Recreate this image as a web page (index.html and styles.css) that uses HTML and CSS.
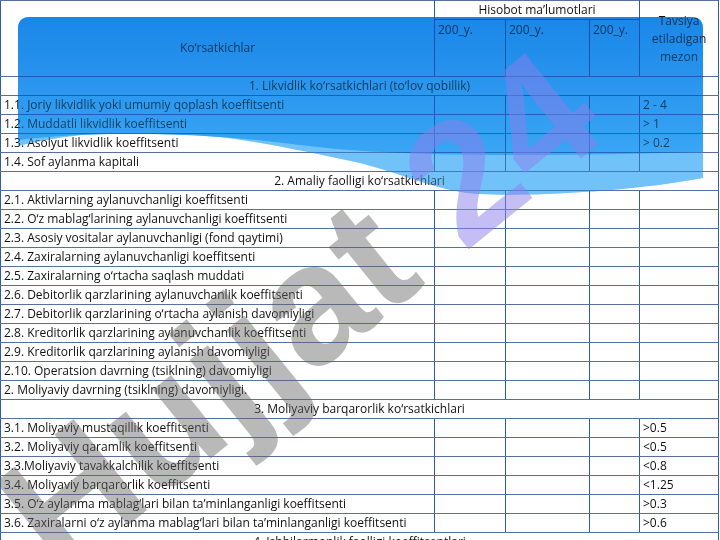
FILE: index.html
```html
<!DOCTYPE html>
<html lang="uz">
<head>
<meta charset="utf-8">
<title>Ko'rsatkichlar</title>
<link rel="stylesheet" href="styles.css">
</head>
<body>
<div class="page">
  <table class="grid">
    <colgroup>
      <col class="c-name"><col class="c-y1"><col class="c-y2"><col class="c-y3"><col class="c-norm">
    </colgroup>
    <tr class="h1">
      <td rowspan="2" class="head-name">Ko‘rsatkichlar</td>
      <td colspan="3" class="center">Hisobot ma’lumotlari</td>
      <td rowspan="2" class="head-norm">Tavsiya etiladigan mezon</td>
    </tr>
    <tr class="h2">
      <td class="year">200_y.</td>
      <td class="year">200_y.</td>
      <td class="year">200_y.</td>
    </tr>
    <tr><td colspan="5" class="section">1. Likvidlik ko‘rsatkichlari (to‘lov qobillik)</td></tr>
    <tr><td>1.1. Joriy likvidlik yoki umumiy qoplash koeffitsenti</td><td></td><td></td><td></td><td>2 - 4</td></tr>
    <tr><td>1.2. Muddatli likvidlik koeffitsenti</td><td></td><td></td><td></td><td>&gt; 1</td></tr>
    <tr><td>1.3. Asolyut likvidlik koeffitsenti</td><td></td><td></td><td></td><td>&gt; 0.2</td></tr>
    <tr><td>1.4. Sof aylanma kapitali</td><td></td><td></td><td></td><td></td></tr>
    <tr><td colspan="5" class="section">2. Amaliy faolligi ko‘rsatkichlari</td></tr>
    <tr><td>2.1. Aktivlarning aylanuvchanligi koeffitsenti</td><td></td><td></td><td></td><td></td></tr>
    <tr><td>2.2. O‘z mablag‘larining aylanuvchanligi koeffitsenti</td><td></td><td></td><td></td><td></td></tr>
    <tr><td>2.3. Asosiy vositalar aylanuvchanligi (fond qaytimi)</td><td></td><td></td><td></td><td></td></tr>
    <tr><td>2.4. Zaxiralarning aylanuvchanligi koeffitsenti</td><td></td><td></td><td></td><td></td></tr>
    <tr><td>2.5. Zaxiralarning o‘rtacha saqlash muddati</td><td></td><td></td><td></td><td></td></tr>
    <tr><td>2.6. Debitorlik qarzlarining aylanuvchanlik koeffitsenti</td><td></td><td></td><td></td><td></td></tr>
    <tr><td>2.7. Debitorlik qarzlarining o‘rtacha aylanish davomiyligi</td><td></td><td></td><td></td><td></td></tr>
    <tr><td>2.8. Kreditorlik qarzlarining aylanuvchanlik koeffitsenti</td><td></td><td></td><td></td><td></td></tr>
    <tr><td>2.9. Kreditorlik qarzlarining aylanish davomiyligi</td><td></td><td></td><td></td><td></td></tr>
    <tr><td>2.10. Operatsion davrning (tsiklning) davomiyligi</td><td></td><td></td><td></td><td></td></tr>
    <tr><td>2. Moliyaviy davrning (tsiklning) davomiyligi.</td><td></td><td></td><td></td><td></td></tr>
    <tr><td colspan="5" class="section">3. Moliyaviy barqarorlik ko‘rsatkichlari</td></tr>
    <tr><td>3.1. Moliyaviy mustaqillik koeffitsenti</td><td></td><td></td><td></td><td>&gt;0.5</td></tr>
    <tr><td>3.2. Moliyaviy qaramlik koeffitsenti</td><td></td><td></td><td></td><td>&lt;0.5</td></tr>
    <tr><td>3.3.Moliyaviy tavakkalchilik koeffitsenti</td><td></td><td></td><td></td><td>&lt;0.8</td></tr>
    <tr><td>3.4. Moliyaviy barqarorlik koeffitsenti</td><td></td><td></td><td></td><td>&lt;1.25</td></tr>
    <tr><td>3.5. O‘z aylanma mablag‘lari bilan ta’minlanganligi koeffitsenti</td><td></td><td></td><td></td><td>&gt;0.3</td></tr>
    <tr><td>3.6. Zaxiralarni o‘z aylanma mablag‘lari bilan ta’minlanganligi koeffitsenti</td><td></td><td></td><td></td><td>&gt;0.6</td></tr>
    <tr><td colspan="5" class="section">4. Ishbilarmonlik faolligi koeffitsentlari</td></tr>
  </table>

  <svg class="banner banner-mul" viewBox="0 0 720 540" aria-hidden="true">
    <defs>
      <linearGradient id="bgrad" x1="0" y1="0" x2="0" y2="1">
        <stop offset="0" stop-color="#1a86e8"/>
        <stop offset="1" stop-color="#3aa6f5"/>
      </linearGradient>
    </defs>
    <path id="wave-light" fill="#72c2fa" d="M18,29 Q18,17 30,17 L691,17 Q703,17 703,29 L703,178 C640,190 540,197 480,194 C440,192 410,176 360,163 C300,150 240,136 160,132 C110,130 60,136 18,146 Z"/>
    <path id="wave-dark" fill="url(#bgrad)" d="M18,29 Q18,17 30,17 L691,17 Q703,17 703,29 L703,152 C550,156 400,158 300,145 C200,132 100,130 18,140 Z"/>
  </svg>
  <svg class="banner banner-tint" viewBox="0 0 720 540" aria-hidden="true">
    <use href="#wave-light"/>
    <use href="#wave-dark"/>
  </svg>

  <div class="watermark" aria-hidden="true"><span class="wm-word">Hujjat</span> <span class="wm-num">24</span></div>
</div>
</body>
</html>
```

FILE: styles.css
```css
html, body {
  margin: 0;
  padding: 0;
  background: #ffffff;
}

body {
  font-family: "Open Sans", "Noto Sans", sans-serif;
  font-size: 12px;
  color: #111111;
}

.page {
  position: relative;
  width: 720px;
  height: 540px;
  overflow: hidden;
}

.grid {
  border-collapse: collapse;
  table-layout: fixed;
  width: 718px;
}

.c-name { width: 434px; }
.c-y1 { width: 71px; }
.c-y2 { width: 84px; }
.c-y3 { width: 50px; }
.c-norm { width: 79px; }

.grid td {
  border-top: 1px solid #56709f;
  border-bottom: 1px solid #56709f;
  border-left: 1px solid #2f5e9e;
  border-right: 1px solid #2f5e9e;
  padding: 0 3px;
  height: 18px;
  line-height: 18px;
  white-space: nowrap;
  overflow: hidden;
  vertical-align: middle;
}

.grid .h1 td {
  height: 18px;
}

.grid .h2 td {
  height: 55px;
}

.grid td.head-name {
  text-align: center;
  padding-top: 19px;
}

.grid td.center {
  text-align: center;
}

.grid td.head-norm {
  text-align: center;
  white-space: normal;
  line-height: 18px;
  padding: 0 2px;
}

.grid td.year {
  vertical-align: top;
  padding-top: 1px;
}

.grid td.section {
  text-align: center;
}

.banner {
  position: absolute;
  left: 0;
  top: 0;
  width: 720px;
  height: 540px;
  pointer-events: none;
}

.banner-mul {
  mix-blend-mode: multiply;
}

.banner-tint {
  opacity: 0.35;
}

.watermark {
  position: absolute;
  left: -30px;
  top: 468px;
  transform-origin: 0 0;
  transform: rotate(-39deg);
  font-family: "Liberation Sans", Arial, sans-serif;
  font-weight: bold;
  font-size: 170px;
  line-height: 1;
  white-space: nowrap;
  pointer-events: none;
}

.wm-word {
  color: rgba(100, 100, 100, 0.45);
}

.wm-num {
  color: rgba(140, 125, 235, 0.5);
}
```
